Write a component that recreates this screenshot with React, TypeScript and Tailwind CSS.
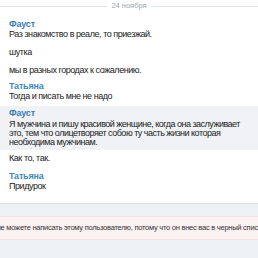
export default function App() {
  const font = { fontFamily: '"Liberation Sans", Arial, sans-serif' };
  return (
    <div className="w-[258px] h-[258px] overflow-hidden bg-white text-[9px] leading-[10px] tracking-[-0.45px] text-[#222]" style={font}>
      <div className="flex items-center h-[12px]">
        <div className="flex-1 h-px bg-[#e4e7ea]" />
        <div className="px-[4px] text-[7.5px] tracking-normal text-[#a0a6ad]">24 ноября</div>
        <div className="flex-1 h-px bg-[#e4e7ea]" />
      </div>
      <div className="px-[9px] pt-[7px]">
        <div className="font-bold text-[#3a7ab8] tracking-[-0.2px]">Фауст</div>
        <div>Раз знакомство в реале, то приезжай.</div>
        <div className="mt-[8px]">шутка</div>
        <div className="mt-[8px]">мы в разных городах к сожалению.</div>
        <div className="mt-[6px] font-bold text-[#4287c2] tracking-[-0.2px]">Татьяна</div>
        <div>Тогда и писать мне не надо</div>
      </div>
      <div className="mt-[5px] bg-[#f0f2f5] pl-[9px] pr-[4px] pt-[2px] pb-[3px]">
        <div className="font-bold text-[#3a7ab8] tracking-[-0.2px]">Фауст</div>
        <div className="mt-[1.5px] leading-[9px] tracking-[-0.5px] whitespace-nowrap">
          Я мужчина и пишу красивой женщине, когда она заслуживает
          <br />
          это, тем что олицетворяет собою ту часть жизни которая
          <br />
          необходима мужчинам.
        </div>
      </div>
      <div className="px-[9px]">
        <div className="mt-[3.5px]">Как то, так.</div>
        <div className="mt-[8px] font-bold text-[#4287c2] tracking-[-0.2px]">Татьяна</div>
        <div>Придурок</div>
      </div>
      <div className="mt-[12px] border-t border-[#d7dee6] bg-[#edf2f7] h-[60px] pt-[12px]">
        <div className="bg-[#fcf1f1] border-y border-[#f4e2e2] h-[24px] flex items-center overflow-hidden">
          <div className="whitespace-nowrap text-[7.5px] tracking-[-0.25px] text-[#333] ml-[-15px]">Вы не можете написать этому пользователю, потому что он внес вас в черный список.</div>
        </div>
      </div>
    </div>
  );
}
